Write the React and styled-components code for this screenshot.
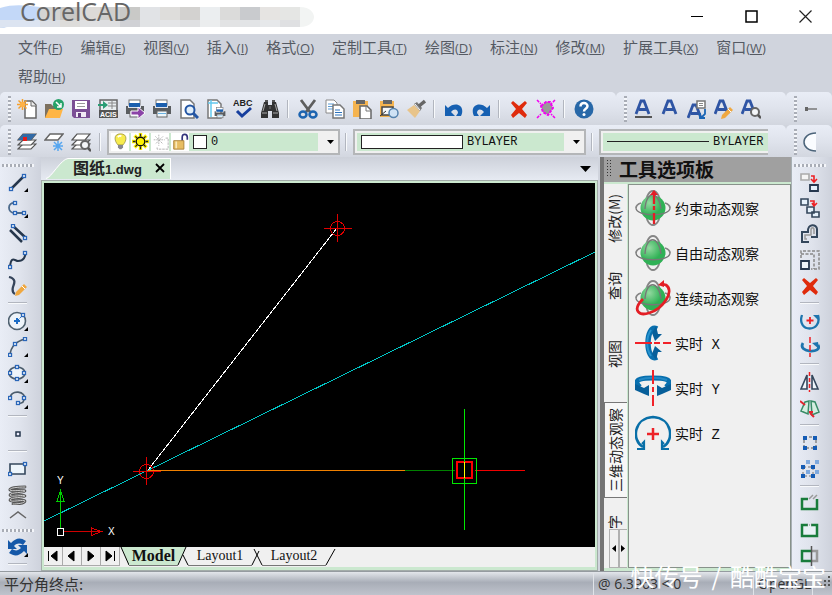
import React, { useState } from 'react';
import styled, { createGlobalStyle } from 'styled-components';

const menus = [
    ['文件', 'F'], ['编辑', 'E'], ['视图', 'V'], ['插入', 'I'], ['格式', 'O'], ['定制工具', 'T'],
    ['绘图', 'D'], ['标注', 'N'], ['修改', 'M'], ['扩展工具', 'X'], ['窗口', 'W'], ['帮助', 'H'],
];

const standardTools = [
    'new', 'open', 'save', 'acis', 'printTo', 'print', 'preview', 'pageSetup', 'spelling', 'find', '-',
    'cut', 'copy', 'paste', 'pasteSpecial', 'brush', '-', 'undo', 'redo', '-', 'remove', 'entity', '-', 'help',
];
const textTools = ['textUnderline', 'text', 'textPaste', 'textEdit', 'textFind'];
const layerTools = ['layers', 'layerFreeze', 'layerFind'];
const drawTools = [
    'line', 'polyline', 'parallel', 'spline', 'sketch', '-',
    'circle', 'arc', 'ellipse', 'ellipseArc', '-', 'point', '-', 'rectangle', 'helix',
];
const modifyTools = [
    'copyEntity', 'copyMany', 'offset', 'scale', 'remove', '-', 'rotate', 'rotate3d', '-',
    'mirror', 'mirror3d', '-', 'pattern', 'patternMany', '-', 'split', 'weld', 'trim',
];

const paletteTabs = ['修改(M)', '查询', '视图', '三维动态观察', '字'];
const paletteItems = [
    ['orbitAxis', '约束动态观察'], ['orbitFree', '自由动态观察'], ['orbitLoop', '连续动态观察'],
    ['realX', '实时 X'], ['realY', '实时 Y'], ['realZ', '实时 Z'],
];

const smudgeTop = [
    '#d4d4d2', '#c9c9c7', '#dcdad7', '#d0cfcd', '#c9c9c7', '#e1e3e6', '#dedddb',
    '#d3d2d0', '#ebeef0', '#dbdbda', '#c9cbce', '#e6e4e2', '#e5e6e4',
];
const smudgeBottom = [
    '#dcdfe4', '#dddcda', '#dfe0e2', '#dddee0', '#d0d1d5', '#e1e3e5', '#e4e5e7',
    '#dfe0e2', '#ebedee', '#e2e3e4', '#e2e4e6', '#e6e8ea', '#dfe0e2',
];

const printer = (
    <>
        <rect x="4" y="1" width="11" height="5" fill="#fff" stroke="#777" />
        <rect x="4" y="4" width="11" height="4" fill="#1c5fae" />
        <path d="M1 7h2v2h13V7h3v8H1z" fill="#5a5d60" />
        <rect x="5" y="12" width="10" height="6" fill="#eef6fb" stroke="#666" />
        <path d="M6 14.500h8" stroke="#6ab0e0" />
    </>
);
const node = (x, y) => <rect x={x - 1.5} y={y - 1.5} width="3" height="3" fill="#fff" stroke="#2a66b8" strokeWidth="1.3" />;
const more = <path d="M20 16v4h-4z" fill="#000" />;
const sheets = (
    <g fill="#fff" stroke="#555" strokeWidth="1.2">
        <path d="M1 17l5-5h13l-5 5z" />
        <path d="M1 13l5-5h13l-5 5z" />
        <path d="M1 8l5-6h13l-5 6z" />
    </g>
);
const lens = (
    <>
        <circle cx="14" cy="13" r="4" fill="#f4f6f8" stroke="#666" strokeWidth="2" />
        <path d="M17 16l3 3" stroke="#555" strokeWidth="2.5" />
    </>
);
const bigA = (x = 0) => <path d={`M${3 + x} 15L${8 + x} 2h3l5 13M${6 + x} 10.500h8`} fill="none" stroke="#2f55a4" strokeWidth="2.800" />;
const pencil = (
    <>
        <path d="M8 16l8-8 3 3-8 8-4 1z" fill="#f0a840" />
        <path d="M14 10l3 3" stroke="#fff" />
    </>
);
const globe = (
    <>
        <ellipse cx="18" cy="18" rx="8" ry="17" fill="none" stroke="#858585" strokeWidth="1.800" />
        <circle cx="18" cy="18" r="12.500" fill="url(#globeFill)" />
        <path d="M10 19c1-19 14-19 16 0M1 18c0 9 34 9 34 0" fill="none" stroke="#777" strokeWidth="1.300" />
        <path d="M6 13c-3 1-5 3-5 5M30 13c3 1 5 3 5 5" fill="none" stroke="#858585" strokeWidth="1.800" />
    </>
);

const drawings = {
    new: (
        <>
            <path d="M8 2h7l4 4v13H8z" fill="#fff" stroke="#666" strokeWidth="1.500" />
            <path d="M14 2v5h5" fill="#eee" stroke="#666" />
            <path d="M5.500 0v11M0 5.500h11M1.500 1.500l8 8M9.500 1.500l-8 8" stroke="#f5a02c" strokeWidth="1.500" />
            <circle cx="5.500" cy="5.500" r="2.500" fill="#ffb347" />
        </>
    ),
    open: (
        <>
            <path d="M1 5h6l2 2h6v12H1z" fill="#7d7160" />
            <path d="M1 19l4-9h14l-3 9z" fill="#ffb545" />
            <circle cx="14.500" cy="5.500" r="5.500" fill="#26a269" />
            <path d="M12 3l5 5M17 4v4h-4" fill="none" stroke="#fff" strokeWidth="1.500" />
        </>
    ),
    save: (
        <>
            <path d="M1 1h18v18H3l-2-2z" fill="#7b4f95" />
            <path d="M4 2h12v8H4z" fill="#fff" />
            <path d="M6 4.500h8M6 7.500h8" stroke="#999" />
            <path d="M5 13h10v5H5z" fill="#f1eaf5" />
            <path d="M7 14h3v4H7z" fill="#654080" />
        </>
    ),
    acis: (
        <>
            <rect x="2" y="1" width="17" height="17" fill="#e9eef0" stroke="#666" strokeWidth="1.500" />
            <path d="M10 4h8M10 7h8M14 2v8" stroke="#888" />
            <rect x="1" y="11" width="19" height="8" fill="#555" />
            <text x="2" y="18" fontFamily="Liberation Sans, sans-serif" fontSize="7" fontWeight="bold" fill="#fff">ACIS</text>
            <path d="M0 5h5V2l5 4-5 4V7H0z" fill="#2a9d74" />
        </>
    ),
    printTo: <>{printer}<path d="M6 12h7V8l7 6-7 6v-4H6z" fill="#8b44a8" stroke="#fff" /></>,
    print: printer,
    preview: (
        <>
            <path d="M2 1h9l4 4v14H2z" fill="#fff" stroke="#777" strokeWidth="1.500" />
            <circle cx="11" cy="11" r="4.500" fill="#e2effa" stroke="#2456a4" strokeWidth="2" />
            <path d="M14 14l5 5" stroke="#2456a4" strokeWidth="3" />
        </>
    ),
    pageSetup: (
        <>
            <path d="M2 1h9l4 4v14H2z" fill="#fff" stroke="#777" strokeWidth="1.500" />
            <path d="M5 1v17M2 4h10" stroke="#62c8ee" strokeWidth="1.500" />
            <g transform="translate(8 8) scale(.6)">{printer}</g>
        </>
    ),
    spelling: (
        <>
            <text x="0" y="7" fontFamily="Liberation Sans, sans-serif" fontSize="9" fontWeight="bold" fill="#222">ABC</text>
            <path d="M4 12l5 5 9-8" fill="none" stroke="#173f9e" strokeWidth="3" />
        </>
    ),
    find: (
        <>
            <path d="M4 3h4v3h4V3h4l3 11v5h-7v-7H8v7H1v-5z" fill="#333" />
            <path d="M5 1h3v2H5zM12 1h3v2h-3zM9 7h2v3H9z" fill="#555" />
            <path d="M2 14h5M13 14h5M5 5l-2 7M15 5l2 7" stroke="#aaa" />
        </>
    ),
    cut: (
        <>
            <path d="M3 1l9 12M17 1L8 13" stroke="#5e5e5e" strokeWidth="2.800" />
            <ellipse cx="5" cy="15.500" rx="3.500" ry="3" fill="none" stroke="#1c64b0" strokeWidth="2.500" />
            <ellipse cx="15" cy="15.500" rx="3.500" ry="3" fill="none" stroke="#1c64b0" strokeWidth="2.500" />
        </>
    ),
    copy: (
        <>
            <path d="M1 1h8l3 3v10H1z" fill="#fff" stroke="#8a8a8a" />
            <path d="M3 5h6M3 7.500h6M3 10h6" stroke="#5a9bd5" />
            <path d="M8 6h7l4 4v9H8z" fill="#fff" stroke="#777" strokeWidth="1.500" />
            <path d="M10 11h5M10 13.500h7M10 16h7" stroke="#2d72bc" />
        </>
    ),
    paste: (
        <>
            <path d="M1 2h15v16H1z" fill="#f5b450" />
            <path d="M4 1h9v4H4z" fill="#666" />
            <path d="M8 7h7l4 4v9H8z" fill="#fff" stroke="#666" strokeWidth="1.500" />
            <path d="M14 7v5h5" fill="none" stroke="#777" />
        </>
    ),
    pasteSpecial: (
        <>
            <path d="M1 2h14v16H1z" fill="#f5b450" />
            <path d="M4 1h9v4H4z" fill="#666" />
            <path d="M3 8h11v8H3z" fill="#f5f7f9" stroke="#444" strokeWidth="1.500" />
            <circle cx="14.500" cy="14" r="4.500" fill="#cfe2f5" stroke="#5582ad" strokeWidth="1.500" />
            <path d="M1 17l6-5" stroke="#333" />
        </>
    ),
    brush: (
        <>
            <path d="M1 11l7-5 6 6-5 7z" fill="#e8c48a" />
            <path d="M8 5l3-2 5 6-2 3z" fill="#777" />
            <path d="M13 7l6-5" stroke="#666" strokeWidth="3.500" />
            <path d="M9 5l5 6" stroke="#fff" />
        </>
    ),
    undo: <path d="M1 6v11h10l-4-4c3-4 7-3 7 1l-2 3h5c5-11-6-15-13-8z" fill="#1660b2" />,
    redo: <path d="M19 6v11H9l4-4c-3-4-7-3-7 1l2 3H3C-2 6 9 2 16 9z" fill="#1660b2" />,
    remove: <path d="M4 2l6 5 6-5 2 2-5 6 5 6-2 3-6-5-6 5-2-3 5-6-5-6z" fill="#df2b0c" />,
    entity: (
        <>
            <path d="M5 7l5-4h4l3 6-5 7-5-3z" fill="#999" stroke="#f200f2" strokeWidth="2" strokeDasharray="3 1" />
            <path d="M1 1l4 4M19 1l-4 4M1 19l4-4M19 19l-4-4" stroke="#f200f2" strokeWidth="1.500" strokeDasharray="3 1" />
        </>
    ),
    help: (
        <>
            <circle cx="10" cy="10" r="9.500" fill="#2868a8" />
            <path d="M6.500 7.500c0-5 7-4 7-.5 0 3-3.500 2.500-3.500 5.500" fill="none" stroke="#fff" strokeWidth="2.500" />
            <circle cx="10" cy="15.500" r="1.500" fill="#fff" />
        </>
    ),
    textUnderline: <>{bigA()}<path d="M2 18h17" stroke="#555" strokeWidth="2" /></>,
    text: bigA(),
    textPaste: (
        <>
            <g transform="translate(-2 4)">{bigA()}</g>
            <path d="M10 2h8v7h-8z" fill="#fff" stroke="#777" strokeWidth="1.500" />
            <path d="M12 4.500h4M12 6.500h4" stroke="#888" />
            <path d="M18 10v5l-4 4M13 14v5h5" fill="none" stroke="#1965b5" strokeWidth="1.800" />
        </>
    ),
    textEdit: <>{bigA(-2)}{pencil}</>,
    textFind: <>{bigA(-2)}{lens}</>,
    layers: <>{sheets}<path d="M1 8l5-6h13l-5 6z" fill="#316aa7" /><path d="M6 5h4v4H6z" fill="#e31b1b" /></>,
    layerFreeze: (
        <>
            <path d="M1 8l5-6h13l-5 6z" fill="#fff" stroke="#666" strokeWidth="1.500" />
            <path d="M14 9v10M9 14h10M10 10l8 8M18 10l-8 8" stroke="#57a6ef" strokeWidth="1.500" />
        </>
    ),
    layerFind: <>{sheets}{lens}</>,
    lamp: (
        <>
            <path d="M10 1c-9 0-7 9-3 13h6c4-4 6-13-3-13z" fill="#f7ec4e" stroke="#a09848" />
            <path d="M7 5c1-2 3-2 4-1" fill="none" stroke="#fff" strokeWidth="2" />
            <path d="M7 14h6v3l-2 2H9l-2-2z" fill="#88888f" />
        </>
    ),
    sun: (
        <>
            <path d="M10 0v20M0 10h20M3 3l14 14M17 3L3 17" stroke="#fff200" strokeWidth="4" />
            <circle cx="10" cy="10" r="5" fill="#fff200" stroke="#111" strokeWidth="1.500" />
            <path d="M10 1v3M10 16v3M1 10h3M16 10h3M4 4l2 2M14 14l2 2M16 4l-2 2M4 16l2-2" stroke="#222" strokeWidth="1.500" />
        </>
    ),
    frost: (
        <>
            <path d="M8 2v13M2 8h13M4 4l9 9M13 4l-9 9" stroke="#aaa" strokeDasharray="2 1" />
            <path d="M16 6h3v13H6v-3" fill="none" stroke="#aaa" strokeDasharray="3 1" />
        </>
    ),
    lock: (
        <>
            <path d="M12 9V5c0-5 6-4 6 0v3" fill="none" stroke="#34347c" strokeWidth="2" />
            <path d="M2 9h12v10H2z" fill="#e7bd63" stroke="#a67c34" />
            <path d="M5 10v8" stroke="#fae8ba" strokeWidth="2" />
        </>
    ),
    line: <><path d="M3 17L16 4" stroke="#26374c" strokeWidth="2.500" />{node(3, 17)}{node(16, 4)}{more}</>,
    polyline: <><path d="M7 5C-1 4-1 15 7 15h9" fill="none" stroke="#4b6a8c" strokeWidth="1.800" />{node(7, 5)}{node(7, 15)}{node(16, 15)}{more}</>,
    parallel: <><path d="M5 2l13 12M2 6l12 12" stroke="#26374c" strokeWidth="2.500" />{node(5, 2)}{node(17, 14)}</>,
    spline: <><path d="M2 17c1-12 5-6 8-6 6 0 7-4 8-9" fill="none" stroke="#26374c" strokeWidth="2" />{node(2, 17)}{node(17, 3)}</>,
    sketch: <><path d="M1 1c8 2 5 7 4 10-1 4 0 6 2 7" fill="none" stroke="#35445a" strokeWidth="2.300" />{pencil}</>,
    circle: <><circle cx="9" cy="10" r="8.500" fill="#eef4fa" stroke="#4f6170" strokeWidth="1.600" /><path d="M9 7v6M6 10h6" stroke="#1c6cc5" strokeWidth="2" /><path d="M10 9l4-4" stroke="#1c6cc5" strokeDasharray="2 1" />{node(15, 4)}{more}</>,
    arc: <><path d="M2 18C3 8 9 4 17 2" fill="none" stroke="#4b5c6c" strokeWidth="1.600" />{node(2, 18)}{node(7, 7)}{node(17, 2)}{more}</>,
    ellipse: <><ellipse cx="9" cy="10" rx="8" ry="6" fill="#eef4fa" stroke="#4b5c6c" strokeWidth="1.600" />{node(2, 10)}{node(16, 10)}{node(9, 4)}{node(9, 16)}{more}</>,
    ellipseArc: <><path d="M2 11C1-1 20 2 16 11c-1 4-5 3-5 3" fill="none" stroke="#4b5c6c" strokeWidth="1.600" />{node(2, 9)}{node(16, 9)}{node(10, 14)}{more}</>,
    point: <rect x="8" y="8" width="4" height="4" fill="#eef" stroke="#26374c" strokeWidth="1.500" />,
    rectangle: <><path d="M2 5h15v10H2z" fill="#edf5fb" stroke="#34475c" strokeWidth="1.600" />{node(2, 15)}{node(17, 5)}</>,
    helix: (
        <g fill="none" strokeLinecap="round">
            <path d="M17 2C9 2 1 3 2 5s15-1 15 1-15 1-15 4 15-1 15 1-15 1-15 4 15-1 15 1-7 3-12 3" stroke="#555" strokeWidth="2.800" />
            <path d="M17 2C9 2 1 3 2 5s15-1 15 1-15 1-15 4 15-1 15 1-15 1-15 4 15-1 15 1-7 3-12 3" stroke="#ccc" />
        </g>
    ),
    sync: (
        <>
            <path d="M0 3v9h9L6 9c3-3 6-3 9-1l3-4C12 0 8 1 3 6z" fill="#1558a8" />
            <path d="M19 17V8h-9l3 3c-3 3-6 3-9 1l-3 4c6 4 10 3 15-2z" fill="#1558a8" />
            {more}
        </>
    ),
    copyEntity: <><path d="M1 2h8v6H1z" fill="#f5f5f5" stroke="#aaa" strokeWidth="1.600" /><path d="M10 13h8v6h-8z" fill="#e5f1fb" stroke="#26384f" strokeWidth="1.800" /><path d="M11 4h3v5M11 7l3 3 3-3" fill="none" stroke="#ed2024" strokeWidth="1.600" /></>,
    copyMany: <><g fill="#e5f1fb" stroke="#34475c" strokeWidth="1.600"><path d="M1 1h7v6H1zM7 9h7v6H7zM12 14h7v5h-7z" /></g><path d="M10 3h4v4M12 5l2 3 3-3" fill="none" stroke="#ed2024" strokeWidth="1.600" /></>,
    offset: <g fill="none"><path d="M9 18H2V8h6C7-1 17 0 17 5v8h-6" stroke="#34475c" strokeWidth="2" /><path d="M7 15H5v-4h6V6c0-3 3-3 3 0v4" stroke="#999" strokeWidth="1.500" /></g>,
    scale: <><path d="M1 8V1h18v18h-8M1 4h13v15" fill="none" stroke="#888" strokeWidth="1.500" strokeDasharray="3 1.500" /><path d="M1 11h8v8H1z" fill="#eef5fb" stroke="#26384f" strokeWidth="1.800" /></>,
    rotate: <><path d="M2 4C-4 22 23 22 18 4" fill="none" stroke="#1d75ae" strokeWidth="2.300" /><path d="M13 4h6v6z" fill="#1d75ae" /><path d="M10 6v7M6.500 9.500h7" stroke="#ed2024" strokeWidth="1.800" /></>,
    rotate3d: <><path d="M3 6c-6 10 20 11 15 2" fill="none" stroke="#1d75ae" strokeWidth="2.800" /><path d="M12 6l6-1 1 7z" fill="#1d75ae" /><path d="M10 0v20" stroke="#ed2024" strokeWidth="1.500" strokeDasharray="6 2" /></>,
    mirror: <><path d="M7 3v14H1zM12 3v14h6z" fill="#eef5fb" stroke="#34475c" strokeWidth="1.600" /><path d="M9.500 0v20" stroke="#ed2024" strokeWidth="1.500" strokeDasharray="4 2" /></>,
    mirror3d: <><path d="M5 4l4-1-1 13-7-3zM11 3l4 1 4 10-7 3z" fill="#d4eee0" stroke="#398c67" strokeWidth="1.500" /><path d="M0 3l5 4M10 15l4 4M9 14h4" stroke="#e3262e" strokeWidth="2" /></>,
    pattern: <><path d="M4 4h12v11H4z" fill="none" stroke="#888" strokeWidth="1.500" strokeDasharray="3 2" /><path d="M3 3h4v4H3zM13 3h4v4h-4zM3 13h4v4H3zM13 13h4v4h-4z" fill="#145bb4" /></>,
    patternMany: <><path d="M6 1h4v4H6zM15 1h4v4h-4zM6 11h4v4H6zM15 11h4v4h-4z" fill="#7fa9dd" /><path d="M3 8h10v9H3z" fill="none" stroke="#777" strokeDasharray="3 2" /><path d="M1 6h4v4H1zM11 6h4v4h-4zM1 15h4v4H1zM11 15h4v4h-4z" fill="#145bb4" /></>,
    split: <><path d="M8 5H2v10h15V5" fill="none" stroke="#187c3b" strokeWidth="2.500" /><path d="M9 5l4-4M13 5l4-4" stroke="#999" strokeWidth="1.500" /></>,
    weld: <><path d="M8 5H2v11h15V5h-6" fill="#e8f1f5" stroke="#187c3b" strokeWidth="2.500" /><path d="M7 5h5" stroke="#777" strokeDasharray="1 1" /></>,
    trim: <><path d="M11 5H2v10h9" fill="none" stroke="#187c3b" strokeWidth="2.500" /><path d="M12 5h5v10h-5" fill="none" stroke="#999" strokeWidth="2.500" /><path d="M11.500 0v20" stroke="#555" strokeWidth="1.500" /></>,
    dimension: <><path d="M3 10h11" stroke="#777" strokeWidth="1.500" /><path d="M2 8h3v4H2z" fill="#666" /></>,
    moon: <path d="M13 1C-3 1-3 19 13 19" fill="#fafcff" stroke="#4c647a" strokeWidth="1.500" />,
};

// Palette drawings use a 36 x 36 grid
const bigDrawings = {
    orbitAxis: <>{globe}<path d="M19 4v10M19 16v4M19 23v11" stroke="#e31e25" strokeWidth="2.300" /><path d="M15 5l4-5 4 5z" fill="#e31e25" /></>,
    orbitFree: globe,
    orbitLoop: <>{globe}<path d="M8 19C-4 31 5 36 14 33 28 29 40 11 31 5l-4-1" fill="none" stroke="#e31e25" strokeWidth="2.800" /><path d="M23 5l6-5v7z" fill="#e31e25" /></>,
    realX: (
        <>
            <path d="M22 4C10-2 10 38 22 32" fill="none" stroke="#086fae" strokeWidth="5.500" />
            <path d="M16 5c-5 7-5 19 0 26" fill="none" stroke="#2793cf" strokeWidth="2" />
            <path d="M21 1l2 8h4l-7 7-3-8zM20 21l7 6h-4l-2 8-4-6z" fill="#075f9a" />
            <path d="M0 18h17M19 18h6M28 18h8" stroke="#f12229" strokeWidth="2" />
        </>
    ),
    realY: (
        <>
            <path d="M5 17C-5 8 12 8 18 8s23 0 13 9" fill="none" stroke="#086fae" strokeWidth="5" />
            <path d="M4 10c8-3 20-3 28 0" fill="none" stroke="#2389c5" strokeWidth="2" />
            <path d="M0 14l9 4 5-3v11l-5-2-9-4zM36 14l-9 4-5-3v11l5-2 9-4z" fill="#075f9a" />
            <path d="M18 0v14M18 17v5M18 25v11" stroke="#f12229" strokeWidth="2" />
        </>
    ),
    realZ: (
        <>
            <path d="M8 32C-4 25-1 3 18 2c19 1 22 23 10 30" fill="none" stroke="#086fa8" strokeWidth="2.600" />
            <path d="M2 34h7v-7l-2 2M34 34h-7v-7l2 2" fill="none" stroke="#086fa8" strokeWidth="2.200" />
            <path d="M18 13v12M12 19h12" stroke="#ed2228" strokeWidth="2.500" />
        </>
    ),
};

const Icon = ({name}) => <Glyph viewBox="0 0 20 20" aria-hidden="true">{drawings[name]}</Glyph>;

const Tools = ({names, vertical}) => names.map((name, i) => (
    name === '-'
        ? <Divider key={i} $vertical={vertical} />
        : <ToolButton key={i} aria-label={name}><Icon name={name} /></ToolButton>
));

const TitleBar = () => (
    <Caption>
        <Smudge viewBox="0 0 314 28" aria-hidden="true">
            <path d="M0 8C15 3 30 6 40 7v13H20L4 28 0 28z" fill="#c3d8f8" />
            <path d="M0 20h40v7H8L0 28z" fill="#dce4f1" />
            {smudgeTop.map((c, i) => <rect key={i} x={40 + i * 20} y="7" width="20" height="13" fill={c} />)}
            {smudgeBottom.map((c, i) => <rect key={i} x={40 + i * 20} y="20" width="20" height="7" fill={c} />)}
            <path d="M300 7c10 0 14 6 14 10s-4 10-14 10z" fill="#f2f4f3" />
        </Smudge>
        <AppName>CorelCAD</AppName>
        <WindowButton aria-label="Minimize"><svg width="13" height="13"><path d="M0 6.500h12" stroke="#000" /></svg></WindowButton>
        <WindowButton aria-label="Maximize"><svg width="13" height="13"><path d="M1 1h11v11H1z" fill="none" stroke="#000" strokeWidth="1.500" /></svg></WindowButton>
        <WindowButton aria-label="Close"><svg width="13" height="13"><path d="M.5.5l12 12M12.500.5l-12 12" stroke="#222" strokeWidth="1.200" /></svg></WindowButton>
    </Caption>
);

const ComboBox = ({label, value, fill, children}) => (
    <Combo $fill={fill}>
        <ComboFace>
            {children}
            <ComboSelect aria-label={label} defaultValue={value}>
                <option>{value}</option>
            </ComboSelect>
        </ComboFace>
        {!fill && <ComboArrow><svg width="7" height="4"><path d="M0 0h7L3.500 4z" /></svg></ComboArrow>}
    </Combo>
);

const Drawing = () => (
    <Canvas viewBox="0 0 551 364" preserveAspectRatio="xMinYMax slice" role="img" aria-label="图纸1.dwg" shapeRendering="crispEdges">
        <path d="M0 338L551 69" stroke="#00c4c4" />
        <path d="M104 287L293 45" stroke="#fff" />
        <g stroke="#e00000" fill="none">
            <path d="M293.500 31v28M280 45.500h28M102.500 274v28M89 288.500h28" />
            <circle cx="293.500" cy="45.500" r="7" />
            <circle cx="102.500" cy="288.500" r="7" />
        </g>
        <rect x="104" y="287" width="257" height="1" fill="#f08000" />
        <rect x="361" y="287" width="50" height="1" fill="#008000" />
        <rect x="431" y="287" width="50" height="1" fill="#f00000" />
        <path d="M413 279h15v16h-15z" stroke="#f00" strokeWidth="2" fill="none" />
        <path d="M420.500 226v121M408.500 275.500h24v25h-24z" stroke="#00e800" fill="none" />
        <path d="M420.500 279v16" stroke="#ff0" />
        <path d="M16.500 345v-38" stroke="#00d000" />
        <path d="M13 318.500l3.500-11 3.500 11z" fill="none" stroke="#00d000" />
        <rect x="20" y="348" width="38" height="1" fill="#d00000" />
        <path d="M47.500 345l10 3.500-10 4z" fill="none" stroke="#e00000" />
        <path d="M13.500 345.500h6v7h-6z" fill="#000" stroke="#fff" />
        <AxisLabel x="13" y="301">Y</AxisLabel>
        <AxisLabel x="64" y="352">X</AxisLabel>
    </Canvas>
);

const SheetTabs = () => (
    <SheetBar>
        {['M4.500 4v10M13 4v10L7 9z', 'M11 4v10L5 9z', 'M6 4v10l6-5z', 'M13.500 4v10M5 4v10l6-5z'].map((d, i) => (
            <NavButton key={i} aria-label={['First', 'Previous', 'Next', 'Last'][i]}>
                <svg width="18" height="18"><path d={d} stroke="#000" /></svg>
            </NavButton>
        ))}
        <svg width="9" height="19"><path d="M1 0h8v19z" fill="#cbe8cf" /><path d="M1 0l8 18" stroke="#000" /></svg>
        <SheetTab $active>Model</SheetTab>
        <svg width="10" height="19"><path d="M0 18V0h8z" fill="#cbe8cf" /><path d="M0 18l8-18M5 8l5 10" stroke="#000" fill="none" /></svg>
        <SheetTab>Layout1</SheetTab>
        <svg width="10" height="19"><path d="M0 18l7-14M2 2l8 16" stroke="#000" fill="none" /></svg>
        <SheetTab>Layout2</SheetTab>
        <svg width="10" height="19"><path d="M0 18l9-16" stroke="#000" /></svg>
    </SheetBar>
);

const Palette = () => {
    const [active, setActive] = useState('三维动态观察');
    return (
        <PaletteBox>
            <PaletteTitle>
                <svg width="6" height="17"><path d="M1.500 0v17M4.500 0v17" stroke="#333" strokeDasharray="1 2" /></svg>
                工具选项板
            </PaletteTitle>
            <PaletteBody>
                <TabColumn>
                    {paletteTabs.map(name => (
                        <SideTab key={name} $active={name === active} onClick={() => setActive(name)}>
                            <span>{name}</span>
                        </SideTab>
                    ))}
                    <TabScroll>
                        <button aria-label="Previous tab"><svg width="4" height="7"><path d="M4 0v7L0 3.500z" /></svg></button>
                        <button aria-label="Next tab"><svg width="4" height="7"><path d="M0 0v7l4-3.500z" /></svg></button>
                    </TabScroll>
                </TabColumn>
                <ItemList>
                    {paletteItems.map(([icon, name]) => (
                        <PaletteItem key={icon}>
                            <svg width="36" height="36" viewBox="0 0 36 36" aria-hidden="true">
                                <defs>
                                    <radialGradient id="globeFill" cx="35%" cy="30%">
                                        <stop offset="0" stopColor="#93d9a0" />
                                        <stop offset="1" stopColor="#2fb155" />
                                    </radialGradient>
                                </defs>
                                {bigDrawings[icon]}
                            </svg>
                            {name}
                        </PaletteItem>
                    ))}
                </ItemList>
            </PaletteBody>
        </PaletteBox>
    );
};

const App = () => (
    <Window>
        <GlobalStyle />
        <TitleBar />
        <MenuBar>
            {menus.map(([name, key]) => (
                <MenuItem key={key}>{name}<small>(<u>{key}</u>)</small></MenuItem>
            ))}
        </MenuBar>
        <ToolRow>
            <ToolBar $grow><Grip /><Tools names={standardTools} /></ToolBar>
            <ToolBar $width="170px"><Grip /><Tools names={textTools} /></ToolBar>
            <ToolBar $width="46px" $wide><Grip /><Tools names={['dimension']} /></ToolBar>
        </ToolRow>
        <ToolRow>
            <ToolBar $grow $wide>
                <Grip />
                <Tools names={layerTools} />
                <Divider />
                <ComboBox label="Layer" value="0">
                    {['lamp', 'sun', 'frost', 'lock'].map(name => (
                        <StateCell key={name}><Icon name={name} /></StateCell>
                    ))}
                    <Swatch $width="14px" />
                </ComboBox>
                <Divider />
                <ComboBox label="Line color" value="BYLAYER"><Swatch $width="102px" /></ComboBox>
                <Divider />
                <ComboBox label="Line style" value="BYLAYER" fill><LineSample /></ComboBox>
            </ToolBar>
            <ToolBar $width="46px" $wide><Grip /><Tools names={['moon']} /></ToolBar>
        </ToolRow>
        <Workspace>
            <SideBar>
                <SideGrip />
                <Tools names={drawTools} vertical />
                <ToolButton $short aria-label="More tools">
                    <svg width="18" height="8"><path d="M1 7l8-6 8 6" fill="none" stroke="#666" strokeWidth="1.500" /></svg>
                </ToolButton>
                <SideGrip />
                <Tools names={['sync', '-']} vertical />
            </SideBar>
            <Documents>
                <DocTabs>
                    <svg width="22" height="21"><path d="M0 21C8 19 14 1 22 1v20z" fill="#cbe8cf" /><path d="M0 20.500C5 20 15 1 22 .5" fill="none" stroke="#fff" /></svg>
                    <DocTab>图纸<b>1.dwg</b></DocTab>
                    <CloseTab aria-label="Close drawing"><svg width="10" height="10"><path d="M1 1l8 8M9 1L1 9" stroke="#000" strokeWidth="1.800" /></svg></CloseTab>
                    <TabList aria-label="Open drawings"><svg width="11" height="7"><path d="M0 0h11L5.500 6z" /></svg></TabList>
                </DocTabs>
                <Frame>
                    <Drawing />
                    <SheetTabs />
                </Frame>
            </Documents>
            <Palette />
            <SideBar $right>
                <SideGrip />
                <Tools names={modifyTools} vertical />
            </SideBar>
        </Workspace>
        <StatusBar>
            <Prompt>平分角终点:</Prompt>
            <StatusCell $width="160px">@ 6.3963 &lt; 0</StatusCell>
            <StatusCell $width="59px">OpenGL</StatusCell>
            <StatusCell $width="20px">
                <svg width="14" height="16"><path d="M11 5h2M7 9h6M3 13h10" stroke="#555" strokeWidth="2" strokeDasharray="2 2" /></svg>
            </StatusCell>
        </StatusBar>
        <Watermark><span>快传号</span><span>/</span><span>酷酷宝宝</span></Watermark>
    </Window>
);

export default App;

const GlobalStyle = createGlobalStyle`
    *{box-sizing: border-box;}
    body{
        margin: 0;
        font-family: "Noto Sans", "Noto Sans CJK SC", sans-serif;
        color: #222;
    }
    button{
        padding: 0;
        border: 0;
        background: none;
        color: inherit;
        font: inherit;
    }
    svg{display: block; flex: none;}
`;
const Window = styled.div`
    position: relative;
    display: flex;
    flex-direction: column;
    min-height: 100vh;
    overflow: hidden;
    background: #d0d4dd;
`;
const Caption = styled.header`
    position: relative;
    display: flex;
    height: 34px;
    background: #fff;
`;
const Smudge = styled.svg`
    position: absolute;
    left: 0;
    top: 0;
    width: 314px;
    height: 28px;
`;
const AppName = styled.h1`
    position: relative;
    flex: 1;
    margin: 0;
    padding-left: 20px;
    color: #666;
    font: 25px/22px "Open Sans", sans-serif;
`;
const WindowButton = styled.button`
    display: grid;
    place-items: center;
    width: 54px;
    height: 32px;
`;
const MenuBar = styled.nav`
    display: flex;
    flex-wrap: wrap;
    column-gap: 18px;
    padding: 0 40px 0 18px;
`;
const MenuItem = styled.button`
    height: 29px;
    padding-bottom: 3px;
    color: #555a63;
    font: 15px/26px "Noto Sans CJK SC", sans-serif;
    white-space: nowrap;
    small{font: 13px "Open Sans", sans-serif;}
`;
const ToolRow = styled.div`
    display: flex;
    height: 33px;
`;
const ToolBar = styled.div`
    display: flex;
    flex: ${props => props.$grow ? '1' : `0 0 ${props.$width}`};
    align-items: center;
    min-width: 0;
    padding: 0 ${props => props.$wide ? '18px' : '0'} 0 8px;
    overflow: hidden;
    border-radius: 5px 5px 0 0;
    background: linear-gradient(#e9edf6, #dfe3ec 50%, #d2d6df);
`;
const Grip = styled.i`
    flex: none;
    width: 3px;
    height: 26px;
    margin-right: 2px;
    background: repeating-linear-gradient(#a9adb6 0 2px, #f4f6fa 2px 4px);
`;
const SideGrip = styled.i`
    flex: none;
    width: 32px;
    height: 3px;
    margin: 7px 0 2px;
    background: repeating-linear-gradient(90deg, #a9adb6 0 2px, #f4f6fa 2px 4px);
`;
const ToolButton = styled.button`
    display: grid;
    flex: none;
    place-items: center;
    width: 27px;
    height: ${props => props.$short ? '14px' : '26px'};
`;
const Glyph = styled.svg`
    width: 20px;
    height: 20px;
`;
const Divider = styled.i`
    flex: none;
    width: ${props => props.$vertical ? '19px' : '2px'};
    height: ${props => props.$vertical ? '2px' : '18px'};
    margin: ${props => props.$vertical ? '3px 0 4px' : '0 5px 0 4px'};
    border: solid #b2b6bf;
    border-width: ${props => props.$vertical ? '1px 0 0' : '0 0 0 1px'};
    background: #f8fafc;
    ${ToolBar}:has(select) &{margin: 0 6px 0 5px;}
`;
const Combo = styled.div`
    position: relative;
    flex: ${props => props.$fill ? '1' : '0 0 233px'};
    height: 26px;
    padding: 2px ${props => props.$fill ? '0' : '20px'} 2px 2px;
    border: 2px solid #b4b6b8;
    border-right-width: ${props => props.$fill ? '0' : '2px'};
    background: #f0f0f0;
`;
const ComboFace = styled.div`
    display: flex;
    align-items: center;
    gap: 2px;
    height: 18px;
    background: #cbe8cf;
`;
const StateCell = styled.span`
    display: grid;
    place-items: center;
    width: 18px;
    height: 18px;
    background: #fff;
    ${Glyph}{width: 17px; height: 17px;}
`;
const Swatch = styled.i`
    flex: none;
    width: ${props => props.$width};
    height: 14px;
    margin-left: ${props => props.$width === '14px' ? '2px' : '4px'};
    border: 1px solid #222;
    background: #fff;
`;
const LineSample = styled.i`
    flex: 1;
    margin-left: 4px;
    border-top: 1px solid #222;
`;
const ComboSelect = styled.select`
    flex: 1;
    min-width: 0;
    height: 18px;
    padding: 1px 0 0 2px;
    border: 0;
    appearance: none;
    background: none;
    color: #111;
    font: 12px "Liberation Mono", monospace;
    ${LineSample} + &{flex: 0 0 57px;}
`;
const ComboArrow = styled.span`
    position: absolute;
    right: 0;
    top: 0;
    display: grid;
    place-items: center;
    width: 16px;
    height: 22px;
    pointer-events: none;
`;
const Workspace = styled.main`
    display: flex;
    flex: 1;
    margin-top: -1px;
`;
const SideBar = styled.div`
    display: flex;
    flex: 0 0 41px;
    flex-direction: column;
    align-items: center;
    padding-right: ${props => props.$right ? '5px' : '6px'};
    border-left: ${props => props.$right ? '1px solid #a8b0b4' : '0'};
    background: linear-gradient(90deg, #e9edf6, #dfe3ec 50%, #ced2dc);
`;
const Documents = styled.section`
    display: flex;
    flex: 1;
    flex-direction: column;
    min-width: 0;
    margin-right: 2px;
`;
const DocTabs = styled.div`
    display: flex;
    align-items: flex-end;
    height: 23px;
    padding: 0 7px 1px 5px;
    background: linear-gradient(#cdd1da, #e6eaf2);
`;
const DocTab = styled.button`
    height: 21px;
    padding: 0 0 3px 5px;
    border-top: 1px solid #fff;
    background: #cbe8cf;
    font: bold 16px/17px "Noto Sans CJK SC", sans-serif;
    b{font: bold 13px "Liberation Sans", sans-serif;}
`;
const CloseTab = styled.button`
    display: grid;
    place-items: center;
    width: 29px;
    height: 21px;
    padding: 0 0 3px 8px;
    border: solid #fff;
    border-width: 1px 1px 0 0;
    background: #cbe8cf;
`;
const TabList = styled.button`
    margin: 0 0 6px auto;
`;
const Frame = styled.div`
    display: flex;
    flex: 1;
    flex-direction: column;
    padding: 2px 2px 3px;
    border: 1px solid #a3aca9;
    background: #cbe8cf;
`;
const Canvas = styled.svg`
    flex: 1 1 364px;
    width: 100%;
    min-height: 0;
    background: #000;
`;
const AxisLabel = styled.text`
    fill: #fff;
    font: 10px "Liberation Sans", sans-serif;
`;
const SheetBar = styled.div`
    display: flex;
    height: 20px;
    background: #f0f0f0;
    svg{overflow: visible;}
`;
const NavButton = styled.button`
    display: grid;
    place-items: center;
    width: 19px;
    height: 19px;
    border: 1px solid #aaa;
    border-width: 0 1px 1px 0;
`;
const SheetTab = styled.button`
    width: ${props => props.$active ? '49px' : '64px'};
    height: 19px;
    border-bottom: 1px solid #777;
    background: ${props => props.$active ? '#cbe8cf' : 'none'};
    color: #111;
    font: ${props => props.$active ? 'bold 16px' : '14px'}/18px "Liberation Serif", serif;
`;
const PaletteBox = styled.aside`
    display: flex;
    flex: 0 0 191px;
    flex-direction: column;
    padding-bottom: 3px;
    border-left: 4px solid #747474;
    background: #cbe8cf;
`;
const PaletteTitle = styled.h2`
    display: flex;
    align-items: center;
    gap: 7px;
    height: 25px;
    margin: 0 0 2px;
    padding: 0 0 2px 2px;
    background: #a0a0a0;
    color: #111;
    font: bold 19px/22px "Noto Sans CJK SC", sans-serif;
`;
const PaletteBody = styled.div`
    display: flex;
    flex: 1;
    background: #f0f0f0;
`;
const TabColumn = styled.div`
    display: flex;
    flex: 0 0 24px;
    flex-direction: column;
    align-items: stretch;
`;
const SideTab = styled.button`
    display: grid;
    place-items: center;
    height: ${props => props.$active ? '96px' : '68px'};
    margin-top: ${props => props.$active ? '14px' : '0'};
    padding-right: 4px;
    border: solid #777;
    border-width: ${props => props.$active ? '1px 0 1px 1px' : '0'};
    background: ${props => props.$active ? '#f7f7f7' : 'none'};
    font: 14px/18px "Noto Sans CJK SC", sans-serif;
    white-space: nowrap;
    span{
        writing-mode: vertical-rl;
        text-orientation: sideways;
        transform: rotate(180deg);
    }
    &:nth-child(5){
        place-items: end center;
        height: 31px;
    }
`;
const TabScroll = styled.div`
    display: flex;
    flex: 1;
    padding-left: 5px;
    button{
        display: grid;
        flex: 1;
        place-items: center;
        border: 1px solid #b0b0b0;
    }
`;
const ItemList = styled.ul`
    flex: 1;
    margin: 0;
    padding: 0 0 0 6px;
    border: 1px solid #87928a;
    outline: 1px solid #cbe8cf;
    list-style: none;
`;
const PaletteItem = styled.li`
    display: flex;
    align-items: center;
    gap: 4px;
    height: 45px;
    color: #111;
    font: 14px "Liberation Mono", "Noto Sans CJK SC", monospace;
`;
const StatusBar = styled.footer`
    display: flex;
    height: 24px;
    border-top: 1px solid #959ba0;
    background: linear-gradient(#e3e6eb, #a8adb7 45%, #bfc3cc);
    color: #333;
    font: 14px/24px "Open Sans", sans-serif;
`;
const Prompt = styled.output`
    flex: 1;
    padding-left: 4px;
    font: 15px/24px "Noto Sans CJK SC", sans-serif;
`;
const StatusCell = styled.span`
    flex: 0 0 ${props => props.$width};
    padding-left: 4px;
    border-left: 1px solid #e0e3e8;
`;
const Watermark = styled.div`
    position: absolute;
    right: 6px;
    bottom: 2px;
    display: flex;
    gap: 9px;
    color: #fff;
    font: 24px/34px "Noto Sans CJK SC", sans-serif;
    pointer-events: none;
`;
